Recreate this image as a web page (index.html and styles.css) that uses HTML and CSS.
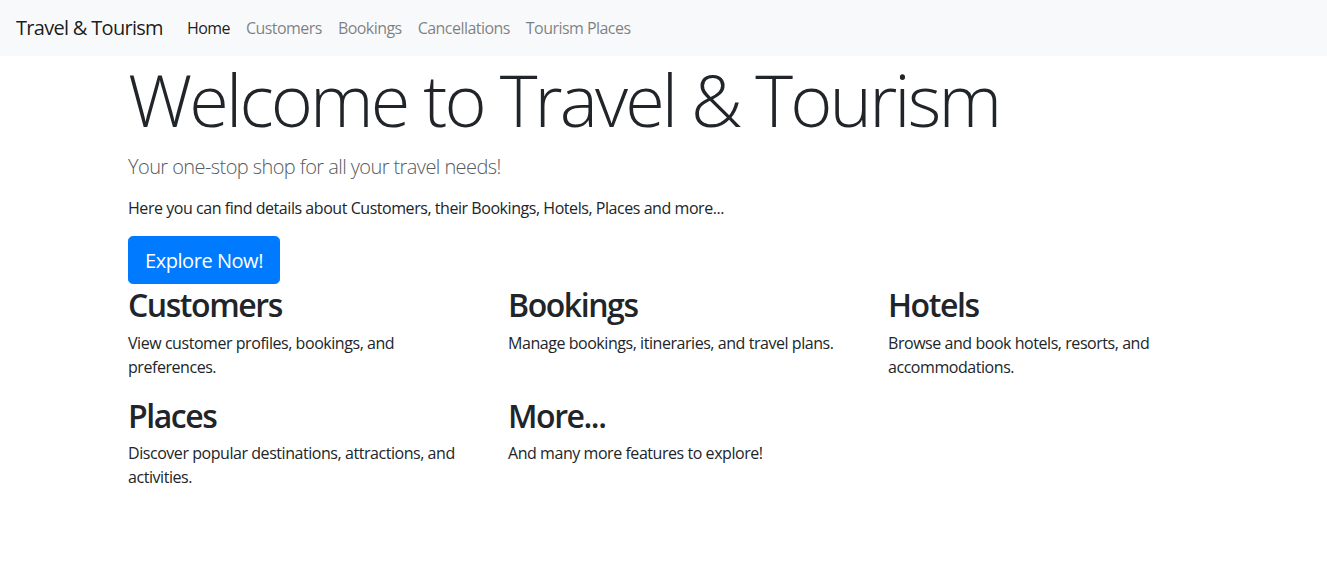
FILE: index.html
```html
<!DOCTYPE html>
<html lang="en">
<head>
<meta charset="utf-8">
<title>Travel &amp; Tourism</title>
<link rel="stylesheet" href="styles.css">
</head>
<body>
<nav class="navbar">
  <a class="brand" href="#">Travel &amp; Tourism</a>
  <ul class="nav">
    <li><a class="nav-link active" href="#">Home</a></li>
    <li><a class="nav-link" href="#">Customers</a></li>
    <li><a class="nav-link" href="#">Bookings</a></li>
    <li><a class="nav-link" href="#">Cancellations</a></li>
    <li><a class="nav-link" href="#">Tourism Places</a></li>
  </ul>
</nav>
<main class="page">
  <h1 class="display">Welcome to Travel &amp; Tourism</h1>
  <p class="lead">Your one-stop shop for all your travel needs!</p>
  <p class="text">Here you can find details about Customers, their Bookings, Hotels, Places and more...</p>
  <a class="btn" href="#">Explore Now!</a>
  <div class="grid">
    <section class="col">
      <h2>Customers</h2>
      <p>View customer profiles, bookings, and preferences.</p>
    </section>
    <section class="col">
      <h2>Bookings</h2>
      <p>Manage bookings, itineraries, and travel plans.</p>
    </section>
    <section class="col">
      <h2>Hotels</h2>
      <p>Browse and book hotels, resorts, and accommodations.</p>
    </section>
    <section class="col">
      <h2>Places</h2>
      <p>Discover popular destinations, attractions, and activities.</p>
    </section>
    <section class="col">
      <h2>More...</h2>
      <p>And many more features to explore!</p>
    </section>
  </div>
</main>
</body>
</html>
```
FILE: styles.css
```css
* { box-sizing: border-box; }
html, body { margin: 0; }
body {
  font-family: "Open Sans", "Noto Sans", "Liberation Sans", sans-serif;
  font-size: 16px;
  line-height: 1.5;
  letter-spacing: -0.028em;
  color: #212529;
  background: #fff;
}
a { text-decoration: none; }

.navbar {
  display: flex;
  align-items: center;
  height: 56px;
  padding: 8px 16px;
  background: #f8f9fa;
}
.brand {
  font-size: 20px;
  line-height: 30px;
  letter-spacing: -0.035em;
  color: rgba(0,0,0,.9);
  margin-right: 16px;
  padding: 5px 0;
}
.nav {
  display: flex;
  list-style: none;
  margin: 0;
  padding: 0;
}
.nav-link {
  display: block;
  padding: 8px;
  letter-spacing: -0.034em;
  color: rgba(0,0,0,.5);
}
.nav-link.active { color: rgba(0,0,0,.9); }

.page {
  padding: 0 0 0 128px;
}
.display {
  font-size: 72px;
  font-weight: 300;
  line-height: 1.2;
  letter-spacing: -0.04em;
  margin: 0 0 8px;
}
.lead {
  font-size: 20px;
  font-weight: 300;
  line-height: 30px;
  letter-spacing: -0.029em;
  color: #555b61;
  padding-top: 2px;
  margin: 0 0 14px;
}
.text { margin: 0 0 16px; }
.btn {
  display: inline-block;
  font-size: 20px;
  line-height: 30px;
  padding: 9px 16px 7px;
  border: 1px solid #007bff;
  border-radius: 4.8px;
  background: #007bff;
  color: #fff;
}
.grid {
  display: grid;
  grid-template-columns: repeat(3, 380px);
}
.col { padding-right: 30px; }
.col h2 {
  font-size: 32px;
  font-weight: 600;
  line-height: 1.2;
  letter-spacing: -0.045em;
  padding-top: 2px;
  margin: 0 0 6px;
}
.col p { margin: 0 0 16px; }
```
